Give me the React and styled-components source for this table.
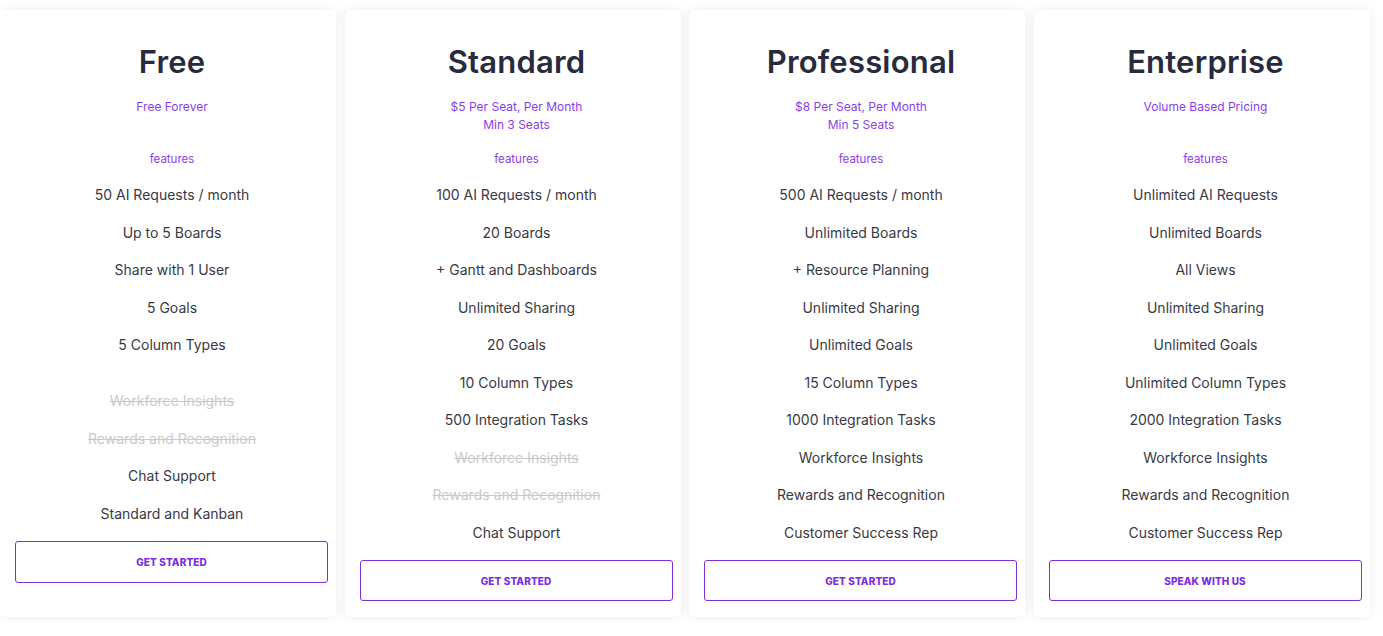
import React from "react";
import styled, { createGlobalStyle } from "styled-components";

const Global = createGlobalStyle`
  html, body { margin: 0; padding: 0; background: #ffffff; }
  body { font-family: "Inter", "Open Sans", sans-serif; -webkit-font-smoothing: antialiased; }
  * { box-sizing: border-box; }
`;

const Page = styled.div`
  display: flex;
  align-items: stretch;
  gap: 8.5px;
  padding: 10px 0 0 0;
  width: 1383px;
  height: 636px;
  overflow: hidden;
`;

const Card = styled.section`
  width: 336px;
  height: 607px;
  background: #ffffff;
  border-radius: 5px;
  box-shadow: 0 0 12px rgba(0, 0, 0, 0.08);
  padding: 32.5px 4px 16px 12px;
  display: flex;
  flex-direction: column;
  align-items: stretch;
  text-align: center;
`;

const Title = styled.h2`
  margin: 0;
  font-size: 31px;
  line-height: 37px;
  font-weight: 600;
  color: #272b3d;
  letter-spacing: 0.2px;
`;

const Price = styled.div`
  margin-top: 18px;
  min-height: 36px;
  font-size: 12px;
  line-height: 18px;
  color: #8a3ee8;
`;

const Label = styled.div`
  margin-top: 16px;
  font-size: 11.5px;
  line-height: 18px;
  color: #8a3ee8;
`;

const List = styled.ul`
  list-style: none;
  margin: 8.5px 0 0;
  padding: 0;
`;

const Item = styled.li`
  height: ${(p) => (p.$spacer ? "18.5px" : "37.5px")};
  line-height: 37.5px;
  font-size: 14px;
  color: ${(p) => (p.$off ? "#c9c9cc" : "#383944")};
  text-decoration: ${(p) => (p.$off ? "line-through" : "none")};
  white-space: nowrap;
`;

const Button = styled.button`
  margin: 9px 4px 0 3px;
  height: 42px;
  border: 1px solid #7c30d8;
  border-radius: 3px;
  background: #ffffff;
  color: #7a2ee0;
  font-family: inherit;
  font-size: 10px;
  font-weight: 800;
  letter-spacing: 0.1px;
  text-transform: uppercase;
  cursor: pointer;
`;

const plans = [
  {
    name: "Free",
    price: ["Free Forever"],
    features: [
      "50 AI Requests / month",
      "Up to 5 Boards",
      "Share with 1 User",
      "5 Goals",
      "5 Column Types",
      { spacer: true },
      { text: "Workforce Insights", off: true },
      { text: "Rewards and Recognition", off: true },
      "Chat Support",
      "Standard and Kanban",
    ],
    cta: "Get Started",
  },
  {
    name: "Standard",
    price: ["$5 Per Seat, Per Month", "Min 3 Seats"],
    features: [
      "100 AI Requests / month",
      "20 Boards",
      "+ Gantt and Dashboards",
      "Unlimited Sharing",
      "20 Goals",
      "10 Column Types",
      "500 Integration Tasks",
      { text: "Workforce Insights", off: true },
      { text: "Rewards and Recognition", off: true },
      "Chat Support",
    ],
    cta: "Get Started",
  },
  {
    name: "Professional",
    price: ["$8 Per Seat, Per Month", "Min 5 Seats"],
    features: [
      "500 AI Requests / month",
      "Unlimited Boards",
      "+ Resource Planning",
      "Unlimited Sharing",
      "Unlimited Goals",
      "15 Column Types",
      "1000 Integration Tasks",
      "Workforce Insights",
      "Rewards and Recognition",
      "Customer Success Rep",
    ],
    cta: "Get Started",
  },
  {
    name: "Enterprise",
    price: ["Volume Based Pricing"],
    features: [
      "Unlimited AI Requests",
      "Unlimited Boards",
      "All Views",
      "Unlimited Sharing",
      "Unlimited Goals",
      "Unlimited Column Types",
      "2000 Integration Tasks",
      "Workforce Insights",
      "Rewards and Recognition",
      "Customer Success Rep",
    ],
    cta: "Speak With Us",
  },
];

export default function App() {
  return (
    <>
      <Global />
      <Page>
        {plans.map((plan) => (
          <Card key={plan.name}>
            <Title>{plan.name}</Title>
            <Price>
              {plan.price.map((line) => (
                <div key={line}>{line}</div>
              ))}
            </Price>
            <Label>features</Label>
            <List>
              {plan.features.map((f, i) => {
                if (typeof f === "string") return <Item key={i}>{f}</Item>;
                if (f.spacer) return <Item key={i} $spacer />;
                return (
                  <Item key={i} $off={f.off}>
                    {f.text}
                  </Item>
                );
              })}
            </List>
            <Button>{plan.cta}</Button>
          </Card>
        ))}
      </Page>
    </>
  );
}
